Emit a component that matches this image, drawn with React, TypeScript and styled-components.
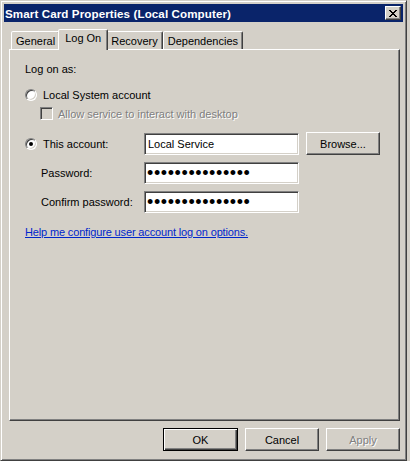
import styled, { createGlobalStyle } from "styled-components"

const GlobalStyle = createGlobalStyle`
    html, body {
        margin: 0;
        padding: 0;
        background: #d4d0c8;
    }
    body {
        font-family: 'Liberation Sans', Arial, sans-serif;
        font-size: 11px;
        color: #000;
    }
`

const Window = styled.div`
    width: 407px;
    height: 461px;
    box-sizing: border-box;
    background: #d4d0c8;
    border: 1px solid;
    border-color: #d4d0c8 #404040 #404040 #d4d0c8;
    box-shadow: inset 1px 1px #fff, inset -1px -1px #808080;
    padding: 3px;
    display: flex;
    flex-direction: column;
`

const TitleBar = styled.div`
    height: 18px;
    background: #0a246a;
    color: #fff;
    display: flex;
    align-items: center;
    justify-content: space-between;
    padding: 0 2px 0 1px;
`

const Title = styled.span`
    font-weight: 700;
    font-size: 11.6px;
    letter-spacing: 0.1px;
`

const CloseButton = styled.div`
    width: 16px;
    height: 14px;
    box-sizing: border-box;
    background: #d4d0c8;
    border: 1px solid;
    border-color: #fff #404040 #404040 #fff;
    box-shadow: inset -1px -1px #808080;
    display: flex;
    align-items: center;
    justify-content: center;
`

const Body = styled.div`
    flex: 1;
    display: flex;
    flex-direction: column;
    padding: 7px 3px 6px 5px;
`

const TabRow = styled.div`
    display: flex;
    align-items: flex-end;
    height: 20px;
    padding-left: 2px;
    position: relative;
    z-index: 1;
`

const Tab = styled.div<{ $active?: boolean }>`
    box-sizing: border-box;
    height: ${p => (p.$active ? "21px" : "18px")};
    margin: ${p => (p.$active ? "0 -2px -1px -2px" : "0")};
    padding: ${p => (p.$active ? "1px 6px 0" : "2px 4px 0")};
    background: #d4d0c8;
    border: 1px solid;
    border-bottom: none;
    border-color: #fff #404040 transparent #fff;
    border-radius: 2px 2px 0 0;
    box-shadow: inset -1px 0 #808080;
    line-height: 14px;
    white-space: nowrap;
    position: relative;
    z-index: ${p => (p.$active ? 2 : 1)};
`

const Panel = styled.div`
    flex: 1;
    box-sizing: border-box;
    border: 1px solid;
    border-color: #fff #404040 #404040 #fff;
    box-shadow: inset -1px -1px #808080;
    padding: 13px 15px;
    display: flex;
    flex-direction: column;
`

const Heading = styled.div`
    line-height: 13px;
`

const Line = styled.div<{ $top: number; $indent?: number }>`
    display: flex;
    align-items: center;
    margin-top: ${p => p.$top}px;
    padding-left: ${p => p.$indent ?? 0}px;
    min-height: 13px;
`

const Radio = styled.span<{ $checked?: boolean }>`
    width: 12px;
    height: 12px;
    box-sizing: border-box;
    border-radius: 50%;
    background: #fff;
    border: 1px solid;
    border-color: #808080 #fff #fff #808080;
    box-shadow: inset 1px 1px #404040, inset -1px -1px #d4d0c8;
    display: flex;
    align-items: center;
    justify-content: center;
    margin-right: 6px;
    flex: none;

    &::after {
        content: "";
        width: 4px;
        height: 4px;
        border-radius: 50%;
        background: ${p => (p.$checked ? "#000" : "transparent")};
    }
`

const Checkbox = styled.span`
    width: 13px;
    height: 13px;
    box-sizing: border-box;
    background: #d4d0c8;
    border: 1px solid;
    border-color: #808080 #fff #fff #808080;
    box-shadow: inset 1px 1px #404040, inset -1px -1px #d4d0c8;
    margin-right: 5px;
    flex: none;
`

const Disabled = styled.span`
    color: #808080;
    text-shadow: 1px 1px #fff;
`

const FieldLabel = styled.div<{ $indent?: number }>`
    width: 119px;
    box-sizing: border-box;
    padding-left: ${p => p.$indent ?? 0}px;
    display: flex;
    align-items: center;
    flex: none;
`

const TextBox = styled.input`
    width: 155px;
    height: 22px;
    box-sizing: border-box;
    margin: 0;
    padding: 0 3px;
    background: #fff;
    border: 1px solid;
    border-color: #808080 #fff #fff #808080;
    box-shadow: inset 1px 1px #404040, inset -1px -1px #d4d0c8;
    font-family: 'Liberation Sans', Arial, sans-serif;
    font-size: 11px;
    color: #000;
    outline: none;

    &[type="password"] {
        font-size: 18px;
        letter-spacing: 0.6px;
        padding-left: 2px;
    }
`

const Button = styled.button<{ $default?: boolean }>`
    width: ${p => (p.$default ? "75px" : "74px")};
    height: 23px;
    box-sizing: border-box;
    margin: 0;
    padding: 0;
    background: #d4d0c8;
    border: 1px solid;
    border-color: ${p => (p.$default ? "#000" : "#fff #404040 #404040 #fff")};
    box-shadow: ${p =>
        p.$default
            ? "inset 1px 1px #fff, inset -1px -1px #404040, inset -2px -2px #808080"
            : "inset -1px -1px #808080"};
    font-family: 'Liberation Sans', Arial, sans-serif;
    font-size: 11px;
    color: #000;

    &:disabled {
        color: #808080;
        text-shadow: 1px 1px #fff;
    }
`

const Link = styled.a`
    color: #0026cc;
    text-decoration: underline;
    line-height: 13px;
    letter-spacing: -0.15px;
    cursor: pointer;
`

const Footer = styled.div`
    display: flex;
    justify-content: flex-end;
    gap: 7px;
    margin-top: 7px;
`

const CloseIcon = () => (
    <svg width="8" height="7" viewBox="0 0 8 7" shapeRendering="crispEdges">
        <path
            d="M0 0h2v1h-2zM6 0h2v1h-2zM1 1h2v1h-2zM5 1h2v1h-2zM2 2h4v1h-4zM3 3h2v1h-2zM2 4h4v1h-4zM1 5h2v1h-2zM5 5h2v1h-2zM0 6h2v1h-2zM6 6h2v1h-2z"
            fill="#000"
        />
    </svg>
)

const tabs = ["General", "Log On", "Recovery", "Dependencies"]

export default function App() {
    return (
        <>
            <GlobalStyle />
            <Window>
                <TitleBar>
                    <Title>Smart Card Properties (Local Computer)</Title>
                    <CloseButton>
                        <CloseIcon />
                    </CloseButton>
                </TitleBar>
                <Body>
                    <TabRow>
                        {tabs.map(t => (
                            <Tab key={t} $active={t === "Log On"}>{t}</Tab>
                        ))}
                    </TabRow>
                    <Panel>
                        <Heading>Log on as:</Heading>
                        <Line $top={12}>
                            <Radio />
                            Local System account
                        </Line>
                        <Line $top={6} $indent={15}>
                            <Checkbox />
                            <Disabled>Allow service to interact with desktop</Disabled>
                        </Line>
                        <Line $top={12}>
                            <FieldLabel>
                                <Radio $checked />
                                This account:
                            </FieldLabel>
                            <TextBox type="text" value="Local Service" readOnly />
                            <Button style={{ marginLeft: 7 }}>Browse...</Button>
                        </Line>
                        <Line $top={7}>
                            <FieldLabel $indent={16}>Password:</FieldLabel>
                            <TextBox type="password" value="xxxxxxxxxxxxxxx" readOnly />
                        </Line>
                        <Line $top={7}>
                            <FieldLabel $indent={16}>Confirm password:</FieldLabel>
                            <TextBox type="password" value="xxxxxxxxxxxxxxx" readOnly />
                        </Line>
                        <Line $top={13}>
                            <Link>Help me configure user account log on options.</Link>
                        </Line>
                    </Panel>
                    <Footer>
                        <Button $default>OK</Button>
                        <Button>Cancel</Button>
                        <Button disabled>Apply</Button>
                    </Footer>
                </Body>
            </Window>
        </>
    )
}
